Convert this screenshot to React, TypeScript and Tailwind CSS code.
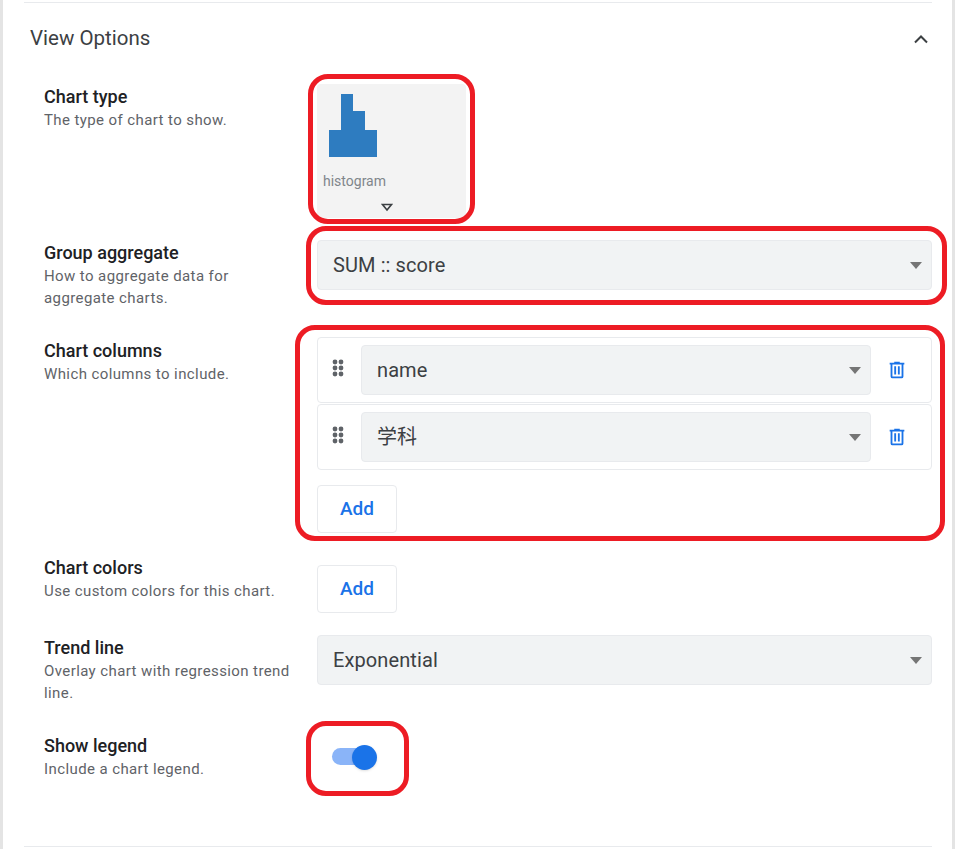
import type { ReactNode } from 'react';

const font = { fontFamily: 'Roboto, "Noto Sans CJK JP", sans-serif' };

function RedBox({ className }: { className: string }) {
  return <div className={`absolute pointer-events-none border-[5px] border-[#ed1c24] rounded-[20px] ${className}`} />;
}

function Label({ title, desc, className = '' }: { title: string; desc: ReactNode; className?: string }) {
  return (
    <div className={`w-[273px] shrink-0 ${className}`}>
      <div className="text-[18px] leading-6 font-medium text-[#202124]">{title}</div>
      <div className="text-[15px] leading-[22px] tracking-[0.4px] text-[#5f6368]">{desc}</div>
    </div>
  );
}

function Select({ value, className }: { value: string; className: string }) {
  return (
    <div className={`flex items-center justify-between bg-[#f1f3f4] border border-[#e8eaed] rounded-[4px] h-[50px] text-xl tracking-[0.1px] text-[#3c4043] ${className}`}>
      <span>{value}</span>
      <div className="w-0 h-0 border-x-[6.5px] border-x-transparent border-t-[7px] border-t-[#757575]" />
    </div>
  );
}

function AddButton() {
  return (
    <button className="w-20 h-12 bg-white border border-[#e8eaed] rounded-[4px] text-[#1a73e8] text-[19px] font-medium">
      Add
    </button>
  );
}

function ColumnRow({ value }: { value: string }) {
  return (
    <div className="flex items-center h-[66px] mb-px border border-[#e8eaed] rounded-[4px] pl-[8px]">
      <svg width="24" height="24" viewBox="0 0 24 24" fill="#5f6368" className="mr-[11px] -mt-[4px] shrink-0">
        <circle cx="9" cy="6" r="2.4" />
        <circle cx="15" cy="6" r="2.4" />
        <circle cx="9" cy="12" r="2.4" />
        <circle cx="15" cy="12" r="2.4" />
        <circle cx="9" cy="18" r="2.4" />
        <circle cx="15" cy="18" r="2.4" />
      </svg>
      <Select value={value} className="w-[510px] pl-[15px] pr-[9px]" />
      <svg width="22" height="22" viewBox="0 0 24 24" fill="#1a73e8" className="ml-[15px]">
        <path d="M9,3V4H4V6H5V19A2,2 0 0,0 7,21H17A2,2 0 0,0 19,19V6H20V4H15V3H9M7,6H17V19H7V6M9,8V17H11V8H9M13,8V17H15V8H13Z" />
      </svg>
    </div>
  );
}

export default function App() {
  return (
    <div style={font} className="w-[955px] h-[849px] overflow-hidden bg-white border-l-[3px] border-r-[3px] border-l-[#e4e4e4] border-r-[#e4e4e4] pl-[21px] pr-5">
      <div className="mt-[2px] h-[843px] border-y border-[#e8eaed] w-[908px] box-content">
        <div className="flex items-center justify-between h-[71px] pl-[6px] -mr-px">
          <span className="text-[20.5px] text-[#3c4043]">View Options</span>
          <svg width="24" height="24" viewBox="0 0 24 24" fill="none" stroke="#3c4043" strokeWidth="2">
            <path d="M6 15.5l6-6 6 6" />
          </svg>
        </div>

        <div className="pl-[20px] mt-[10px]">
          <div className="flex">
            <Label title="Chart type" desc="The type of chart to show." className="pt-px" />
            <div className="relative w-[149px] h-[134px] bg-[#f3f3f3] rounded-[4px]">
              <svg width="48" height="63" viewBox="0 0 48 63" fill="#2e7cc0" className="ml-3 mt-[10px]">
                <path d="M12 0h12v17h12v19h12v27H0V36h12z" />
              </svg>
              <div className="ml-[6px] mt-[14px] text-[14px] leading-5 text-[#80868b]">histogram</div>
              <svg width="12" height="9" viewBox="0 0 12 9" fill="none" stroke="#3c4043" strokeWidth="1.6" className="ml-[64px] mt-[12px]">
                <path d="M1.5 1.5h9L6 7z" />
              </svg>
              <RedBox className="-left-[9px] -top-[10px] w-[167px] h-[150px]" />
            </div>
          </div>

          <div className="flex mt-[22px]">
            <Label title="Group aggregate" desc={<>How to aggregate data for<br />aggregate charts.</>} className="pt-px" />
            <div className="relative w-[615px]">
              <Select value="SUM :: score" className="pl-[15px] pr-[9px]" />
              <RedBox className="-left-[11px] -top-[14px] w-[641px] h-[79px]" />
            </div>
          </div>

          <div className="flex mt-[28px]">
            <Label title="Chart columns" desc="Which columns to include." className="pt-[2px]" />
            <div className="relative w-[615px]">
              <ColumnRow value="name" />
              <ColumnRow value="学科" />
              <div className="mt-[15px]"><AddButton /></div>
              <RedBox className="-left-[22px] -top-[12px] w-[650px] h-[216px]" />
            </div>
          </div>

          <div className="flex mt-[22px]">
            <Label title="Chart colors" desc="Use custom colors for this chart." className="pt-px" />
            <div className="mt-[10px]"><AddButton /></div>
          </div>

          <div className="flex mt-[22px]">
            <Label title="Trend line" desc={<>Overlay chart with regression trend<br />line.</>} className="pt-px" />
            <div className="w-[615px]">
              <Select value="Exponential" className="pl-[15px] pr-[9px]" />
            </div>
          </div>

          <div className="flex mt-[29px]">
            <Label title="Show legend" desc="Include a chart legend." className="pt-px" />
            <div className="relative w-[64px] h-[50px]">
              <div className="ml-[15px] mt-[15px] w-[34px] h-[17px] rounded-full bg-[#8ab4f8]" />
              <div className="absolute left-[35px] top-[12px] w-[25px] h-[25px] rounded-full bg-[#1a73e8] shadow-sm" />
              <RedBox className="-left-[11px] -top-[12px] w-[103px] h-[75px]" />
            </div>
          </div>
        </div>
      </div>
    </div>
  );
}
